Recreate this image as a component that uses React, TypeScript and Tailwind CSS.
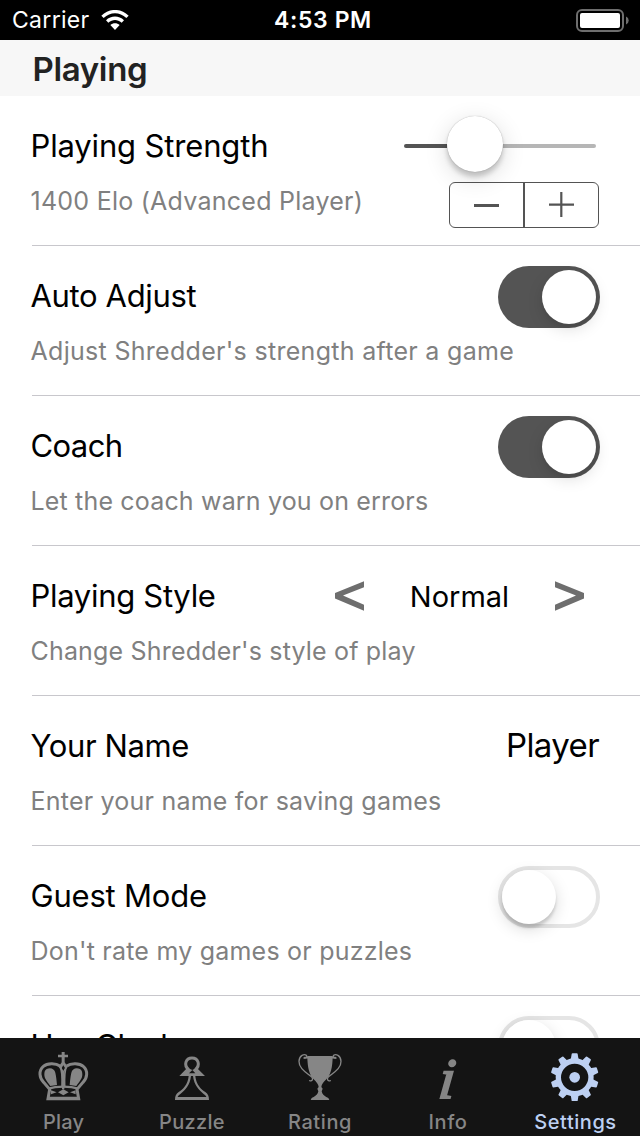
import type { ReactNode } from "react";

const GREY = "#868686";

function Toggle({ on }: { on: boolean }) {
  return (
    <div
      className={
        on
          ? "flex h-[62px] w-[102px] items-center justify-end rounded-full bg-[#545454] pr-1"
          : "flex h-[62px] w-[102px] items-center rounded-full border-4 border-[#e5e5e5] bg-white"
      }
    >
      <div
        className={
          on
            ? "size-[54px] rounded-full bg-white shadow-[0_5px_16px_rgba(0,0,0,0.13),0_4px_3px_rgba(0,0,0,0.04)]"
            : "size-[54px] rounded-full bg-white shadow-[0_5px_16px_rgba(0,0,0,0.15),0_4px_3px_rgba(0,0,0,0.14)]"
        }
      />
    </div>
  );
}

function Row({ title, titleClass, sub, subClass, children }: {
  title: string;
  titleClass: string;
  sub: string;
  subClass: string;
  children?: ReactNode;
}) {
  return (
    <section className="ml-8 flex h-[150px] shrink-0 justify-between border-b border-[#c8c7cc] pr-10">
      <div className="-ml-[1.5px] flex w-0 flex-col whitespace-nowrap pt-[30px]">
        <h2 className={`text-[31px] leading-10 text-black ${titleClass}`}>{title}</h2>
        <p className={`mt-[17px] text-[25px] leading-9 text-[#808080] ${subClass}`}>{sub}</p>
      </div>
      {children}
    </section>
  );
}

function Strength() {
  return (
    <div className="flex flex-col items-end pt-5">
      <div className="mr-1 flex h-14 w-48 items-center">
        <div className="mt-1 h-1 w-[43px] rounded-l-full bg-[#545454]" />
        <div className="z-10 size-14 shrink-0 rounded-full bg-white shadow-[0_0_1px_rgba(0,0,0,0.35),0_5px_5px_rgba(0,0,0,0.18),0_6px_24px_rgba(0,0,0,0.14)]" />
        <div className="mt-1 h-1 flex-1 rounded-r-full bg-[#b6b6b6]" />
      </div>
      <div className="mt-[10px] mr-px flex h-[46px] w-[150px] rounded-md border border-[#545454]">
        <button className="flex w-[75px] items-center justify-center border-r-2 border-[#545454]" aria-label="Decrease">
          <span className="mt-px h-[3px] w-[25px] bg-[#545454]" />
        </button>
        <button className="flex flex-1 items-center justify-center" aria-label="Increase">
          <svg className="-mt-px" width="25" height="25" viewBox="0 0 25 25" fill="#545454">
            <path d="M0 11.5H25V13.7H0ZM11.2 0H13.4V25H11.2Z" />
          </svg>
        </button>
      </div>
    </div>
  );
}

function Chevron({ flip }: { flip?: boolean }) {
  return (
    <svg width="29" height="30" viewBox="0 0 29 30" className={flip ? "-mt-0.5 -scale-x-100" : "-mt-0.5"} fill="#6e6e6e">
      <path d="M29 .3V6.2L8 14.6 29 23.7V29.7L0 17.4V12Z" />
    </svg>
  );
}

function KingIcon() {
  return (
    <svg width="128" height="53" viewBox="0 54 384 159" fill="none" stroke={GREY}>
      <path d="M185 66H194V74H204V82H194V97L203 111 193 125V178H186V125L176 111 185 97V82H174V74H185Z" fill={GREY} stroke="none" />
      <path d="M190 106L195 114 190 122 185 114Z" fill="#141414" stroke="none" />
      <path
        d="M180 108C167 98 141 99 130 109C115 122 118 144 131 157L149 178L144 206H236L231 178L249 157C262 144 265 122 250 109C239 99 213 98 200 108"
        strokeWidth="9"
      />
      <path d="M180 108C186 118 187 139 186 172M200 108C194 118 193 139 194 172" strokeWidth="5" />
      <path d="M145 176C170 168 210 168 235 176" strokeWidth="7" />
      <path d="M140 117C153 112 163 117 166 128C169 140 170 155 171 165L151 168C145 158 133 147 133 134C133 125 135 120 140 117ZM240 117C227 112 217 117 214 128C211 140 210 155 209 165L229 168C235 158 247 147 247 134C247 125 245 120 240 117Z" fill={GREY} stroke="none" />
      <path d="M174 187L190 178 206 187 190 196ZM153 181L170 187 153 193ZM227 181L210 187 227 193ZM146 200H234V209H146Z" fill={GREY} stroke="none" />
    </svg>
  );
}

function PawnIcon() {
  return (
    <svg width="128" height="53" viewBox="384 54 384 159" fill="none" stroke={GREY} strokeWidth="9">
      <path d="M566 119C550 105 557 84 576 84C595 84 602 105 586 119" />
      <path d="M562 113L538 138H566C564 164 548 179 536 186C528 192 525 198 525 210H627C627 198 624 192 616 186C604 179 588 164 586 138H615L590 113L577 120 586 130H567L577 120Z" fill={GREY} stroke="none" />
      <path d="M573 138H579C582 166 598 181 610 191C616 195 618 198 619 201H533C534 198 536 195 542 191C555 181 570 166 573 138Z" fill="#141414" stroke="none" />
    </svg>
  );
}

function CupIcon() {
  return (
    <svg width="128" height="53" viewBox="123 54 384 159" fill="none" stroke={GREY} strokeWidth="4" strokeLinecap="round">
      <path d="M277 78H353C353 112 347 135 334 148C325 157 320 163 319 171L323 176L320 184C322 195 332 201 340 204L343 210H287L290 204C298 201 308 195 310 184L307 176L311 171C310 163 305 157 296 148C283 135 277 112 277 78Z" fill={GREY} stroke="none" />
      <path d="M267 84C274 85 278 80 274 76C268 71 253 75 252 94C251 116 277 129 291 142C295 148 291 155 284 152M363 84C356 85 352 80 356 76C362 71 377 75 378 94C379 116 353 129 339 142C335 148 339 155 346 152" />
      <path d="M269 83H285M361 83H345" strokeWidth="5" />
    </svg>
  );
}

function GearIcon() {
  return (
    <svg width="128" height="53" viewBox="246 174 384 159" fill="none">
      <g fill="#bdd0f2">
        {[0, 36, 72, 108, 144, 180, 216, 252, 288, 324].map((a) => (
          <path key={a} d="M422 210L425 192Q425 190 428 190H440Q443 190 443 192L446 210Z" transform={`rotate(${a} 434 262)`} />
        ))}
        <circle cx="434" cy="262" r="16" />
      </g>
      <circle cx="434" cy="262" r="49" stroke="#bdd0f2" strokeWidth="16" />
    </svg>
  );
}

function Tab({ label, labelClass, active, children }: { label: string; labelClass: string; active?: boolean; children: ReactNode }) {
  return (
    <button className="flex w-32 flex-col items-center pt-[10px]">
      <span className="flex h-[53px] w-32 items-center justify-center">{children}</span>
      <span className={`mt-[9px] text-[20px] leading-6 font-medium ${active ? "text-[#bdd0f2]" : "text-[#868686]"} ${labelClass}`}>
        {label}
      </span>
    </button>
  );
}

export default function App() {
  return (
    <main className="flex h-[1136px] w-[640px] flex-col overflow-hidden bg-white font-['Inter','Liberation_Sans',sans-serif]">
      <header className="grid h-10 shrink-0 grid-cols-3 items-center bg-black pr-[11px] pl-3 text-white">
        <div className="flex items-center gap-[11px] text-[23px] leading-10">
          <span className="tracking-[0.3px]">Carrier</span>
          <svg width="28" height="20" viewBox="303 30 84 60" fill="white">
            <path d="M304 47C327 24 363 24 386 47L379 54C359 35 331 35 311 54ZM318 61C333 46 357 46 372 61L365 68C352 57 338 57 325 68ZM331 75C339 68 351 68 359 75L345 90Z" />
          </svg>
        </div>
        <span className="pl-[5px] text-center text-[23px] font-semibold tracking-[0.6px]">4:53 PM</span>
        <svg className="justify-self-end" width="53" height="23" viewBox="0 0 53 23">
          <rect x="1" y="1" width="46" height="21" rx="5" fill="none" stroke="#6e6e6e" strokeWidth="2" />
          <rect x="4" y="4" width="40" height="15" rx="2" fill="white" />
          <path d="M50 7.5Q52.7 8.5 52.7 11.5T50 15.5Z" fill="#6e6e6e" />
        </svg>
      </header>
      <h1 className="flex h-14 shrink-0 items-center bg-[#f7f7f7] pt-0.5 pl-[32.5px] text-[33px] leading-10 font-semibold tracking-[-0.35px] text-[#222222]">
        <span>Playing</span>
      </h1>
      <div className="flex h-[942px] shrink-0 flex-col overflow-hidden">
        <Row title="Playing Strength" titleClass="tracking-[-0.15px]" sub="1400 Elo (Advanced Player)" subClass="tracking-[0.25px]">
          <Strength />
        </Row>
        <Row title="Auto Adjust" titleClass="tracking-[-0.35px]" sub="Adjust Shredder's strength after a game" subClass="tracking-[0.3px]">
          <div className="pt-5"><Toggle on /></div>
        </Row>
        <Row title="Coach" titleClass="tracking-[-0.6px]" sub="Let the coach warn you on errors" subClass="tracking-[0.17px]">
          <div className="pt-5"><Toggle on /></div>
        </Row>
        <Row title="Playing Style" titleClass="tracking-[-0.3px]" sub="Change Shredder's style of play" subClass="tracking-[0.18px]">
          <div className="mr-4 flex h-[101px] items-center">
            <Chevron />
            <span className="w-[191px] text-center text-[29px] text-black">Normal</span>
            <Chevron flip />
          </div>
        </Row>
        <Row title="Your Name" titleClass="tracking-[-0.4px]" sub="Enter your name for saving games" subClass="tracking-[0.22px]">
          <span className="mr-px pt-[29px] text-[33px] leading-10 tracking-[-0.6px] text-black">Player</span>
        </Row>
        <Row title="Guest Mode" titleClass="tracking-[-0.2px]" sub="Don't rate my games or puzzles" subClass="tracking-[0.22px]">
          <div className="pt-5"><Toggle on={false} /></div>
        </Row>
        <Row title="Use Clock" titleClass="tracking-[-0.35px]" sub="" subClass="">
          <div className="pt-5"><Toggle on={false} /></div>
        </Row>
      </div>
      <nav className="flex h-[98px] shrink-0 bg-[#141414]">
        <Tab label="Play" labelClass="pr-px tracking-[0.2px]"><KingIcon /></Tab>
        <Tab label="Puzzle" labelClass="tracking-[0.3px]"><PawnIcon /></Tab>
        <Tab label="Rating" labelClass="tracking-[0.6px]"><CupIcon /></Tab>
        <Tab label="Info" labelClass="tracking-[0.6px]">
          <span className="-skew-x-6 pt-[7px] pr-px font-['Liberation_Serif',serif] text-[57px] leading-[53px] text-[#868686] italic [-webkit-text-stroke:2px_#868686]">i</span>
        </Tab>
        <Tab label="Settings" labelClass="pr-px tracking-[0.55px]" active><GearIcon /></Tab>
      </nav>
    </main>
  );
}
